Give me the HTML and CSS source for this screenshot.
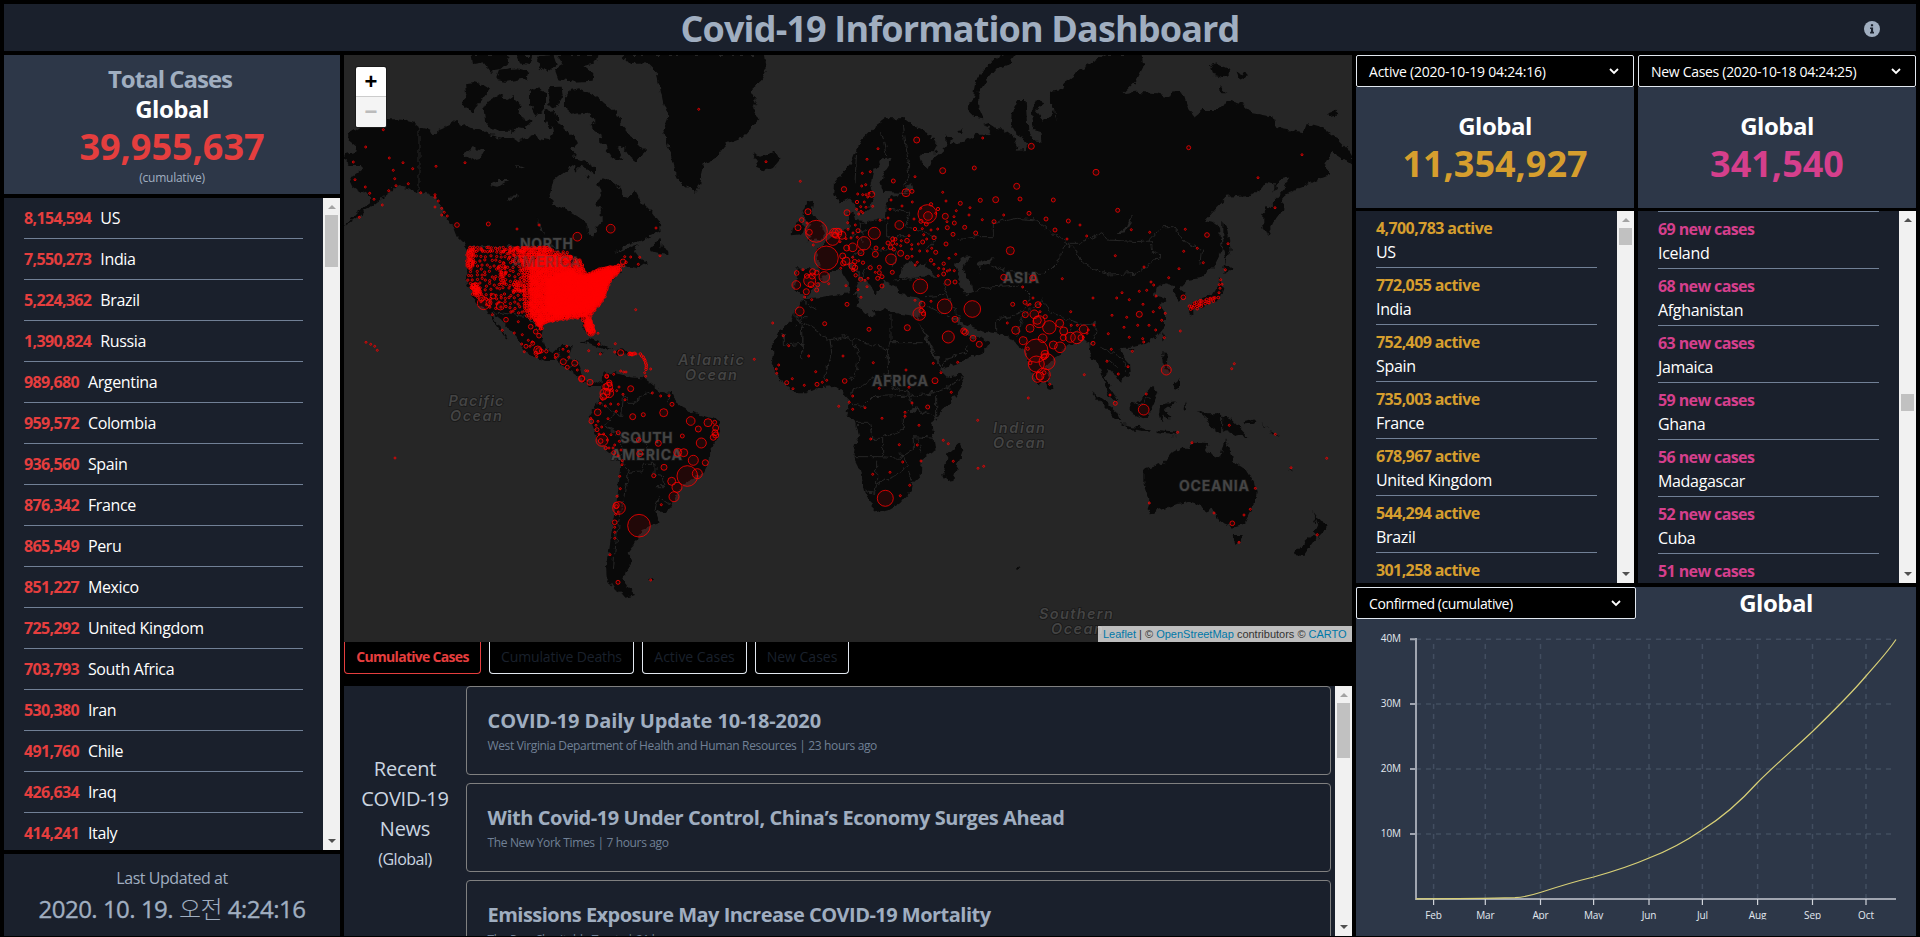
FILE: index.html
```html
<!DOCTYPE html>
<html lang="en">
<head>
<meta charset="utf-8">
<title>Covid-19 Information Dashboard</title>
<link rel="stylesheet" href="styles.css">
</head>
<body>
<div class="dashboard">
  <header class="header">
    <h1 class="title">Covid-19 Information Dashboard</h1>
    <svg class="info" viewBox="0 0 16 16"><circle cx="8" cy="8" r="8" fill="#a0aec0"/><path d="M6.9 3.2h2.2v2.1H6.9zM6.1 6.5h3v4.3h.9v1.6H6.1v-1.6h.9V8.1h-.9z" fill="#1a202c"/></svg>
  </header>
  <main class="main">
    <section class="left">
      <div class="total">
        <div class="total-title">Total Cases</div>
        <div class="global">Global</div>
        <div class="big red">39,955,637</div>
        <div class="caption">(cumulative)</div>
      </div>
      <div class="scroller cases">
        <ul class="list">
          <li><b>8,154,594</b>US</li><li><b>7,550,273</b>India</li><li><b>5,224,362</b>Brazil</li><li><b>1,390,824</b>Russia</li><li><b>989,680</b>Argentina</li><li><b>959,572</b>Colombia</li><li><b>936,560</b>Spain</li><li><b>876,342</b>France</li><li><b>865,549</b>Peru</li><li><b>851,227</b>Mexico</li><li><b>725,292</b>United Kingdom</li><li><b>703,793</b>South Africa</li><li><b>530,380</b>Iran</li><li><b>491,760</b>Chile</li><li><b>426,634</b>Iraq</li><li><b>414,241</b>Italy</li>
        </ul>
        <div class="bar"><i class="up"></i><span class="thumb thumb-cases"></span><i class="down"></i></div>
      </div>
      <div class="updated"><div class="updated-label">Last Updated at</div><div class="updated-time">2020. 10. 19. <span>오전</span> 4:24:16</div></div>
    </section>

    <section class="center">
      <div class="map">
        <svg class="map-canvas" viewBox="344 55 1008 587">
          <defs><filter id="coast" x="0" y="0" width="100%" height="100%" color-interpolation-filters="sRGB"><feTurbulence type="fractalNoise" baseFrequency="0.16" numOctaves="2" seed="4"/><feDisplacementMap in="SourceGraphic" scale="7" xChannelSelector="R" yChannelSelector="G"/></filter></defs>
          <rect x="344" y="55" width="1008" height="587" fill="#262626"/>
          <g filter="url(#coast)">
          <rect x="344" y="55" width="1008" height="587" fill="#262626"/>
          <g class="land" transform="translate(340,50) scale(.333333)">
            <path d="M20 250L45 242 60 232 100 225 140 210 185 212 225 222 237 232 262 238 285 250 300 238 330 225 350 210 360 230 380 225 400 235 430 240 450 255 475 262 510 262 530 275 560 265 580 255 600 265 625 270 640 250 635 225 650 205 670 235 690 255 700 250 715 275 690 300 710 325 700 345 665 370 640 390 630 430 640 465 680 480 715 500 740 520 745 550 760 560 768 535 785 515 785 480 770 460 785 430 775 400 785 385 815 395 840 415 850 440 870 445 885 420 905 455 935 485 960 520 962 545 930 560 890 575 850 590 825 612 850 602 893 585 885 605 900 625 920 635 890 655 870 650 840 645 835 670 800 700 795 735 765 765 748 800 765 840 752 858 735 835 725 808 680 802 640 808 610 825 605 860 615 895 640 905 665 885 695 885 690 910 680 930 715 935 725 965 730 985 750 1005 775 992 792 1002 782 1008 750 1008 720 985 680 955 650 930 620 930 580 920 550 905 540 875 510 840 485 810 460 790 452 785 465 810 490 845 505 868 495 862 470 825 450 800 440 780 415 765 395 730 380 700 378 650 385 600 375 585 350 560 340 535 320 500 300 470 285 440 260 430 237 425 205 415 170 405 150 425 130 440 100 465 60 495 15 527 50 490 90 460 90 440 65 425 40 410 28 385 50 370 70 355 60 345 30 345 12 330 15 315 45 308 50 290 25 270Z"/>
            <path d="M375 100L400 97 430 105 450 118 430 145 410 170 395 190 368 165 378 130Z M430 175L445 155 480 132 500 150 520 135 545 170 535 190 550 205 575 215 560 235 530 230 515 245 480 245 450 230 435 210Z M690 120L720 115 770 140 800 165 830 190 850 230 880 265 915 300 890 335 870 320 850 295 830 285 850 330 820 325 800 300 790 260 750 230 770 210 740 190 700 195 675 175 675 140Z M570 125L590 115 615 125 615 180 590 195 570 165Z M625 112L665 110 668 135 645 175 625 165Z M395 15L430 15 500 15 510 35 480 60 450 65 430 40 400 45Z M480 62L530 55 565 65 560 85 500 95 470 90Z M530 15L580 15 570 45 540 40Z M590 20L640 15 650 45 620 65 600 50Z M650 15L775 15 772 35 730 45 760 70 758 92 700 95 655 88 645 60 670 45Z M615 185L640 180 652 210 630 235 615 215Z M700 325L730 330 765 350 765 370 720 350 705 365Z M780 268L800 262 798 285 782 285Z M735 378L750 375 745 390Z M845 15L870 42 920 40 950 70 960 110 970 160 985 200 970 240 985 290 1000 350 1020 395 1050 418 1068 428 1080 400 1095 340 1130 320 1160 280 1210 260 1255 210 1240 180 1250 155 1230 120 1265 90 1280 60 1275 15Z M1238 310L1260 320 1285 312 1305 305 1322 330 1305 350 1275 362 1245 350 1255 335Z M930 600L950 570 962 568 965 592 985 605 985 615 935 608Z M720 875L745 868 780 880 820 898 785 893 745 878Z M825 900L850 898 870 912 830 915Z M775 908L790 908 785 914Z"/>
            <path d="M1395 745L1440 742 1480 735 1530 730 1555 735 1550 770 1595 800 1605 780 1640 778 1680 795 1725 800 1735 815 1755 860 1770 895 1785 925 1805 965 1820 980 1875 972 1865 1010 1830 1060 1795 1095 1775 1125 1780 1155 1785 1200 1745 1230 1742 1275 1720 1295 1715 1320 1680 1360 1655 1375 1610 1387 1595 1380 1595 1360 1575 1325 1560 1260 1540 1220 1545 1190 1555 1160 1545 1115 1530 1100 1520 1085 1528 1050 1505 1025 1480 1008 1440 1012 1400 1030 1375 1030 1350 1015 1325 995 1308 970 1295 940 1300 910 1298 880 1320 840 1355 810 1365 785Z M1860 1178L1870 1200 1855 1240 1840 1290 1820 1293 1810 1275 1817 1240 1825 1210Z"/>
            <path d="M790 970L830 970 870 982 910 985 935 1005 960 1025 1000 1030 1010 1060 1040 1080 1090 1095 1130 1105 1142 1135 1130 1170 1108 1200 1105 1240 1090 1270 1050 1290 1020 1315 1010 1340 990 1375 975 1388 945 1380 955 1410 945 1425 905 1440 890 1470 880 1490 865 1510 878 1535 860 1560 850 1590 870 1615 885 1632 860 1640 825 1620 800 1580 798 1540 808 1500 815 1440 825 1380 835 1320 840 1260 840 1235 800 1200 775 1170 755 1120 752 1095 770 1065 785 1030 788 1000Z M922 1588L942 1584 938 1592Z M1120 1620L1135 1632Z"/>
            <path d="M1400 455L1420 452 1415 485 1430 510 1445 530 1455 550 1440 570 1400 577 1415 558 1400 545 1415 525 1395 510 1388 485Z M1360 530L1380 515 1390 530 1385 550 1355 553Z"/>
          </g>
          <g class="land" transform="translate(850,50) scale(.333333)">
            <path d="M-45 395L0 345 15 310 35 270 70 235 110 205 160 205 190 228 230 245 262 285 255 310 210 308 215 340 235 355 250 325 270 310 290 290 285 260 310 262 300 285 340 275 380 255 425 252 400 215 430 235 460 240 490 262 505 290 500 302 530 300 538 275 500 255 483 225 485 190 500 150 530 150 535 240 550 270 575 275 570 245 552 240 545 180 555 150 580 160 555 180 580 215 612 180 620 215 615 175 600 150 600 125 640 120 650 90 690 60 740 30 770 15 875 15 880 50 860 90 820 130 860 125 920 130 960 140 970 120 1000 130 1015 175 1035 200 1060 180 1110 180 1130 150 1180 165 1210 190 1270 200 1280 235 1310 240 1360 250 1370 222 1420 235 1460 265 1495 300 1506 318 1506 345 1470 320 1445 305 1425 340 1440 375 1400 390 1360 410 1320 425 1300 440 1300 480 1270 520 1252 558 1240 530 1240 490 1270 455 1300 420 1315 385 1290 390 1270 425 1275 400 1250 395 1230 420 1200 435 1130 440 1100 470 1065 510 1090 515 1110 530 1115 600 1090 650 1050 685 1010 690 990 710 1008 740 985 752 975 730 975 708 945 700 920 712 915 735 950 745 925 765 945 790 945 830 920 860 890 880 850 890 820 890 805 900 840 940 842 970 810 995 800 975 775 960 765 985 778 1010 805 1050 790 1050 770 1025 760 980 740 930 720 925 715 880 700 865 680 880 645 890 615 925 590 950 600 985 580 1000 565 1000 550 985 535 940 522 895 495 880 480 860 440 850 400 845 345 822 325 800 305 800 335 830 345 850 365 870 390 860 418 880 400 905 360 925 290 950 275 955 255 905 225 850 205 815 210 790 215 755 205 742 150 735 135 710 100 690 95 715 75 735 55 700 50 690 20 665 0 635 -5 650 20 670 40 695 25 700 10 735 0 735 -5 700 -30 660 -70 668 -100 705 -130 740 -165 720 -160 655 -95 660 -90 635 -105 605 -90 590 -60 565 0 530 -5 490 10 482 15 510 60 515 105 505 108 460 125 440 180 430 100 425 90 395 110 360 122 322 95 325 70 360 62 400 70 440 50 480 30 497 15 465 0 445 -30 458 -47 435Z"/>
            <path d="M460 15L497 15 480 40 440 55 410 90 385 130 385 170 400 205 375 200 350 175 370 140 375 100 400 60 430 30Z M1080 45L1100 40 1145 60 1120 82 1090 75Z M1160 65L1195 78 1180 87 1165 78Z M1110 112L1132 130 1112 130Z M1435 190L1455 182 1467 192 1440 200Z M322 240L338 238 330 252Z M1120 515L1130 530 1136 560 1142 600 1128 640 1120 600Z M1125 640L1152 658 1120 672Z M1110 685L1120 720 1108 748 1060 768 1030 782 1030 795 1018 790 1015 768 1050 750 1085 735 1100 710Z M940 850L946 858 940 872Z M840 897L855 897 847 910Z M937 910L953 912 950 950 965 970 950 962 938 940Z M970 1003L990 985 990 1015 975 1020Z"/>
            <g transform="translate(0,900)"><path d="M722 122L760 150 800 185 815 217 795 205 755 160Z M812 222L860 230 905 242 900 245 845 238Z M920 240L985 245 970 262 975 252 920 246Z M840 160L860 160 890 130 905 110 925 125 915 150 900 185 880 205 845 190Z M930 165L975 157 945 178 965 205 950 205 942 190 935 218 928 190Z M1040 180L1060 190 1100 190 1140 205 1170 235 1195 262 1160 255 1130 240 1110 250 1080 230 1070 205Z M1180 215L1215 205 1210 218 1185 220Z M1005 150L1008 175 1000 180Z M880 360L940 340 965 310 1000 290 1020 300 1030 275 1075 280 1065 300 1110 325 1125 265 1140 300 1155 340 1190 360 1215 400 1220 430 1205 480 1185 520 1150 530 1110 515 1095 490 1085 470 1070 488 1055 465 1020 455 970 465 930 480 905 490 892 480 900 455 880 400Z M1147 555L1175 555 1172 580 1157 583Z M1387 485L1410 515 1432 520 1420 545 1405 560 1395 545 1405 525Z M1390 555L1400 560 1360 618 1332 615 1350 590Z M592 90L608 112 597 120 590 108Z M1315 350L1333 363 1320 357Z M1235 220L1260 238 1240 226Z M1262 240L1290 260 1270 250Z M498 650L512 655 500 660Z"/></g>
            <path class="water" d="M150 680L155 650 185 630 200 652 230 640 225 650 260 680 215 680 180 687Z M315 645L340 620 362 618 350 640 335 650 360 690 370 730 340 730 325 700 330 680Z M380 640L410 630 430 628 415 645 385 650Z M795 555L830 530 845 495 845 520 825 550Z M165 425L190 415 185 400 165 410Z"/>
            <path class="water" d="M182 1070L200 1072 195 1092 182 1088Z"/>
          </g>
          <g class="land" transform="translate(340,50) scale(.333333)"><path class="water" d="M370 315L400 295 435 300 420 325 395 330Z M450 405L475 390 505 390 470 410Z M590 500L600 540 615 555 600 530Z M510 440L540 435 500 455Z M530 345L560 350 540 355Z M475 250L530 258 525 268 480 262Z"/></g>
          <g class="borders" transform="translate(850,50) scale(.333333)">
            <path d="M-165 765L-165 800-60 870-55 905-80 995M-165 800L-145 800-140 880-200 885-200 850M-145 830V935M-60 870L-20 860 0 865 115 900 110 920 123 878H218M123 795V878M0 865L25 905 20 960 0 990M115 900L115 970 60 990 0 1030M115 970L125 1010 190 1035 240 1030 300 1010 345 975M0 1060L40 1070 70 1040 180 1035M180 1035L190 1075 160 1100 160 1140 100 1160M260 1035V1100L190 1075M20 1120H60L65 1165 98 1165V1220H10M98 1220L145 1225 190 1200 190 1160 255 1165M80 1235V1300L130 1280 175 1245 150 1210M80 1300L75 1330 50 1325M175 1260L185 1300M205 1165L215 1210M40 235L20 300 15 400M95 245L110 320M160 225L180 380 155 415M105 470L180 490 165 530 260 560 230 600M110 515V560L170 560M60 600L140 600 130 650M100 510L30 520 40 580M320 570L380 560 430 560 430 520 500 505 560 510 600 545 650 580 620 640 590 670 540 670 480 665 430 650 390 635 388 675M650 580L690 580 755 550 770 570 870 575 900 570 905 600 930 620 860 670 780 675 720 655 690 630 680 600ZM900 570L935 530 970 530 1000 570 1055 600 1050 640M350 735L380 720 430 710 510 705 545 740 520 780 480 800 440 810 440 845M280 700L300 750 325 800M225 740L290 735M235 770L300 800M280 950L285 925 340 910 355 890M500 860L520 800 575 750 600 790 700 825 740 820 735 860 720 890M660 820L670 850 690 840M750 890L790 910 820 930 830 970M770 925L800 950M1115 1090V1150M845 1060L870 1065 900 1040M0 560L50 540M0 620L45 600M130 690L210 685M-150 745L-100 780M30 690L60 640M-130 800L-165 830"/>
          </g>
          <g class="borders" transform="translate(340,50) scale(.333333)"><path d="M237 232V425M385 590H630L700 620M850 1030L865 1060 890 1060 895 1040 940 1025M985 1030V1060M780 1060L825 1090 790 1130 835 1150 845 1180 845 1230 870 1270 905 1265 910 1240 945 1240 945 1275 970 1280 975 1310 945 1310M850 1040L845 1100 825 1090M850 1180L900 1160 925 1190 935 1230M865 1270L850 1350 835 1420 825 1500 820 1560M945 1380L955 1340 1000 1370M650 930L660 900M690 955L720 935M460 785L560 800 600 840"/></g>
          </g>
          <g class="continents">
            <text x="546.5" y="249" textLength="53">NORTH</text>
            <text x="646.5" y="443" textLength="52">SOUTH</text><text x="646.5" y="460" textLength="71">AMERICA</text>
            <text x="1021" y="283" textLength="36">ASIA</text><text x="900" y="386" textLength="56">AFRICA</text><text x="1214" y="491" textLength="70">OCEANIA</text>
          </g>
          <g class="oceans">
            <text x="476" y="406" textLength="55">Pacific</text><text x="476" y="421" textLength="52">Ocean</text>
            <text x="711" y="365" textLength="66">Atlantic</text><text x="711" y="380" textLength="52">Ocean</text>
            <text x="1019" y="433" textLength="52">Indian</text><text x="1019" y="448" textLength="52">Ocean</text>
            <text x="1076" y="619" textLength="74">Southern</text><text x="1077" y="634" textLength="52">Ocean</text>
          </g>
          <g id="cases"></g>
          <text class="faint" x="546" y="266.5" textLength="69">AMERICA</text>
        </svg>
        <div class="zoom-control"><span>+</span><span class="off">−</span></div>
        <div class="attribution"><a>Leaflet</a> | © <a>OpenStreetMap</a> contributors © <a>CARTO</a></div>
      </div>
      <nav class="tabs"><span class="tab tab-1 on">Cumulative Cases</span><span class="tab tab-2">Cumulative Deaths</span><span class="tab tab-3">Active Cases</span><span class="tab tab-4">New Cases</span></nav>
      <div class="news">
        <div class="news-head"><span>Recent<br>COVID-19<br>News</span><small>(Global)</small></div>
        <div class="articles">
          <article><h2 class="a1">COVID-19 Daily Update 10-18-2020</h2><p>West Virginia Department of Health and Human Resources | 23 hours ago</p></article>
          <article><h2 class="a2">With Covid-19 Under Control, China’s Economy Surges Ahead</h2><p>The New York Times | 7 hours ago</p></article>
          <article><h2 class="a3">Emissions Exposure May Increase COVID-19 Mortality</h2><p>The Pew Charitable Trusts | 21 hours ago</p></article>
        </div>
        <div class="bar"><i class="up"></i><span class="thumb thumb-news"></span><i class="down"></i></div>
      </div>
    </section>

    <section class="right">
      <div class="stats">
        <div class="stat">
          <div class="select"><span class="s1">Active (2020-10-19 04:24:16)</span><svg viewBox="0 0 12 8"><path d="M2 2l4 4 4-4"/></svg></div>
          <div class="stat-card"><div class="global">Global</div><div class="big yellow">11,354,927</div></div>
          <div class="scroller">
            <ul class="pairs active">
              <li><b>4,700,783 active</b>US</li><li><b>772,055 active</b>India</li><li><b>752,409 active</b>Spain</li><li><b>735,003 active</b>France</li><li><b>678,967 active</b>United Kingdom</li><li><b>544,294 active</b>Brazil</li><li><b>301,258 active</b></li>
            </ul>
            <div class="bar"><i class="up"></i><span class="thumb thumb-active"></span><i class="down"></i></div>
          </div>
        </div>
        <div class="stat">
          <div class="select"><span class="s2">New Cases (2020-10-18 04:24:25)</span><svg viewBox="0 0 12 8"><path d="M2 2l4 4 4-4"/></svg></div>
          <div class="stat-card"><div class="global">Global</div><div class="big pink">341,540</div></div>
          <div class="scroller">
            <ul class="pairs new">
              <li><b>69 new cases</b>Iceland</li><li><b>68 new cases</b>Afghanistan</li><li><b>63 new cases</b>Jamaica</li><li><b>59 new cases</b>Ghana</li><li><b>56 new cases</b>Madagascar</li><li><b>52 new cases</b>Cuba</li><li><b>51 new cases</b></li>
            </ul>
            <div class="bar"><i class="up dark"></i><span class="thumb thumb-new"></span><i class="down"></i></div>
          </div>
        </div>
      </div>
      <div class="chart">
        <div class="chart-head"><div class="select"><span class="s3">Confirmed (cumulative)</span><svg viewBox="0 0 12 8"><path d="M2 2l4 4 4-4"/></svg></div><div class="global">Global</div></div>
        <svg class="plot" viewBox="1356 619 560 317">
          <g stroke="#4a5568" stroke-opacity=".75" stroke-width="1.5">
            <path stroke-dasharray="5 5" d="M1416 639.2H1896M1416 704H1896M1416 769H1896M1416 834H1896"/>
            <path stroke-dasharray="5 5" d="M1433.6 899V639M1485.3 899V639M1540.5 899V639M1593.6 899V639M1649 899V639M1702.4 899V639M1757.6 899V639M1812.5 899V639M1866 899V639"/>
          </g>
          <g stroke="#a0a5b0" stroke-width="2" fill="none">
            <path d="M1416 638V899M1415 899H1896M1410 639.2H1416M1410 704H1416M1410 769H1416M1410 834H1416"/>
            <path stroke="#cfd3da" stroke-width="1.2" d="M1433.6 899V905M1485.3 899V905M1540.5 899V905M1593.6 899V905M1649 899V905M1702.4 899V905M1757.6 899V905M1812.5 899V905M1866 899V905"/>
          </g>
          <path class="curve" d="M1416 898.8C1450 898.8 1490 898.4 1515 897.7C1525 897 1534 894.6 1541 892.3C1560 886 1577 881 1593.6 877C1613 871.5 1632 865.5 1649 858C1670 850 1686 841 1702.4 829.7C1723 817 1740 802 1757.6 782.5C1775 765 1794 749 1812.5 731.5C1831 713.5 1850 695 1866 676C1878 662 1887 653 1896 639.5"/>
          <g class="ticks"><g text-anchor="end"><text x="1401" y="642">40M</text><text x="1401" y="707">30M</text><text x="1401" y="772">20M</text><text x="1401" y="837">10M</text></g>
          <g text-anchor="middle"><text x="1433.6" y="919">Feb</text><text x="1485.3" y="919">Mar</text><text x="1649" y="919">Jun</text><text x="1702.4" y="919">Jul</text><text x="1866" y="919">Oct</text></g>
          <g text-anchor="middle" class="months"><text x="1540.5" y="919">Apr</text><text x="1593.6" y="919">May</text><text x="1757.6" y="919">Aug</text><text x="1812.5" y="919">Sep</text></g></g>
        </svg>
      </div>
    </section>
  </main>
</div>
<script src="map.js"></script>
</body>
</html>
```
FILE: styles.css
```css
* { box-sizing: border-box; }
body { margin: 0; height: 937px; background: #000; color: #fff; font-family: "Open Sans", "Noto Sans", "Noto Sans CJK KR", sans-serif; overflow: hidden; }
ul, h1, h2, p { margin: 0; padding: 0; list-style: none; }
.dashboard { height: 937px; padding: 4px 4px 1px; display: flex; flex-direction: column; gap: 4px; }
.header { height: 47px; background: #1a202c; display: grid; grid-template-columns: 1fr auto 1fr; align-items: center; }
.title { grid-column: 2; color: #a0aec0; font-size: 36px; line-height: 47px; padding-top: 1px; font-weight: 700; letter-spacing: -.85px; white-space: nowrap; }
.info { width: 16px; height: 16px; justify-self: end; margin-right: 36px; margin-top: 2px; }
.main { flex: 1; min-height: 0; display: grid; grid-template-columns: 336px 1008px 560px; gap: 4px; }
.left { display: grid; grid-template-rows: 139px 652px 82px; gap: 4px; text-align: center; }
.total { background: #2d3748; padding-top: 9px; }
.total-title { color: #a0aec0; font-size: 24px; line-height: 30px; font-weight: 700; letter-spacing: -1px; padding-right: 4px; }
.global { font-size: 24px; line-height: 30px; font-weight: 700; letter-spacing: -.5px; }
.big { font-size: 36px; line-height: 45px; font-weight: 700; }
.red { color: #e53e3e; }
.yellow { color: #d69e2e; }
.pink { color: #d53f8c; }
.caption { color: #a0aec0; font-size: 12px; line-height: 16px; padding-top: 1px; letter-spacing: -.25px; }
.scroller { display: flex; min-height: 0; background: #1a202c; overflow: hidden; }
.list { flex: 1; padding: 0 20px; text-align: left; }
.list li { height: 41px; line-height: 41px; border-bottom: 1px solid #718096; font-size: 16px; letter-spacing: -.35px; white-space: nowrap; }
.list b { color: #e53e3e; font-weight: 700; margin-right: 9px; letter-spacing: -.65px; }
.updated { background: #1a202c; color: #a0aec0; padding-top: 12px; }
.updated-label { font-size: 16px; line-height: 24px; letter-spacing: -.45px; }
.updated-time { font-size: 24px; line-height: 36px; letter-spacing: -.5px; -webkit-text-stroke: .35px #a0aec0; }
.updated-time span { font-family: "Noto Sans CJK KR", sans-serif; font-weight: 300; -webkit-text-stroke: 0; }

.bar { flex: none; width: 17px; background: #f1f1f1; display: flex; flex-direction: column; align-items: center; }
.bar i { width: 0; height: 0; border: 4px solid transparent; }
.bar .up { border-top: 0; border-bottom-color: #a3a3a3; margin: 7px 0 6px; }
.bar .up.dark { border-bottom-color: #505050; }
.bar .down { border-bottom: 0; border-top-color: #505050; margin-top: auto; margin-bottom: 7px; }
.thumb { width: 13px; background: #c1c1c1; }
.thumb-cases { height: 52px; }
.thumb-news { height: 55px; }
.thumb-active { height: 17px; }
.thumb-new { height: 17px; margin-top: 166px; }

.center { display: grid; grid-template-rows: 587px 44px 250px; min-width: 0; }
.map { position: relative; overflow: hidden; background: #262626; }
.map-canvas { display: block; width: 1008px; height: 587px; }
.land path { fill: #090909; }
.land path.water { fill: #262626; }
.borders { fill: none; stroke: #262626; stroke-width: 3; }
.continents, .oceans { font-family: Inter, sans-serif; fill: #444; text-anchor: middle; stroke: #171717; stroke-width: 1.5px; paint-order: stroke; }
.continents { font-size: 14px; font-weight: 700; }
.faint { font: 700 14px Inter, sans-serif; fill: #444; fill-opacity: .45; text-anchor: middle; }
.oceans { font-size: 14.5px; font-weight: 600; font-style: italic; fill: #444; }
#cases { fill: #f00; fill-opacity: .1; stroke: #f00; stroke-width: 1; stroke-opacity: .8; }
.zoom-control { position: absolute; left: 12px; top: 12px; width: 30px; height: 60px; border-radius: 2px; background: #fff; box-shadow: 0 0 0 1px #1b1b1b; overflow: hidden; color: #000; font: 700 22px/30px "Liberation Sans", sans-serif; text-align: center; }
.zoom-control span { display: block; height: 30px; border-bottom: 1px solid #ccc; }
.zoom-control .off { background: #f4f4f4; color: #bbb; border: 0; }
.attribution { position: absolute; right: 0; bottom: 0; width: 254px; height: 16px; padding: 0 5px; background: rgba(255,255,255,.7); color: #333; font: 11px/16px "Liberation Sans", sans-serif; white-space: nowrap; }
.attribution a { color: #0078a8; }
.tabs { display: flex; height: 32px; gap: 8px; }
.tab { border: 1px solid #e2e8f0; border-top: 0; border-radius: 0 0 4px 4px; color: #1a202c; font-size: 14px; line-height: 30px; text-align: center; font-weight: 400; white-space: nowrap; }
.tab-1 { width: 137px; } .tab-2 { width: 145px; } .tab-3 { width: 105px; } .tab-4 { width: 94px; }
.tab-2 { letter-spacing: -.15px; }
.tab.on { color: #e53e3e; border-color: #e53e3e; font-weight: 700; letter-spacing: -.7px; }
.news { display: flex; background: #1a202c; overflow: hidden; }
.news-head { width: 122px; display: flex; flex-direction: column; justify-content: center; text-align: center; color: #cbd5e0; font-size: 20px; line-height: 30px; letter-spacing: -.25px; padding-top: 6px; }
.news-head small { font-size: 16px; letter-spacing: -.5px; }
.articles { flex: 1; display: flex; flex-direction: column; gap: 8px; padding-right: 4px; }
.articles article { flex: none; height: 89px; border: 1px solid gray; border-radius: 4px; padding: 19px 20.5px; }
.articles h2 { color: #a0aec0; font-size: 20px; line-height: 30px; font-weight: 700; letter-spacing: -.45px; }
.articles .a1 { letter-spacing: -.07px; }
.articles .a2 { letter-spacing: -.44px; }
.articles .a3 { letter-spacing: -.52px; }
.articles p { color: #718096; font-size: 12px; line-height: 20px; letter-spacing: -.35px; }

.right { display: grid; grid-template-rows: 528px 349px; gap: 4px; }
.stats { display: grid; grid-template-columns: 278px 278px; gap: 4px; min-height: 0; }
.stat { display: grid; grid-template-rows: 32px 121px 372px; min-height: 0; }
.stat .scroller { margin-top: 3px; height: 372px; }
.select { height: 32px; display: flex; align-items: center; justify-content: space-between; background: #000; border: 1px solid #e2e8f0; border-radius: 2px; padding: 0 13px 0 12px; font-size: 14px; letter-spacing: -.22px; white-space: nowrap; }
.s2 { letter-spacing: -.3px; }
.s3 { letter-spacing: -.4px; }
.select svg { width: 12px; height: 8px; fill: none; stroke: #fff; stroke-width: 1.8; }
.stat-card { background: #2d3748; text-align: center; padding-top: 24px; }
.pairs { flex: 1; padding: 0 20px; letter-spacing: -.33px; font-size: 16px; line-height: 24px; }
.pairs li { height: 57px; padding-top: 5px; border-bottom: 1px solid #718096; white-space: nowrap; }
.pairs b { display: block; font-weight: 700; letter-spacing: -.6px; margin-top: -.5px; }
.active b { color: #d69e2e; }
.new b { color: #d53f8c; }
.new::before { content: ""; display: block; height: 1px; background: #718096; }
.chart { background: #2d3748; overflow: hidden; }
.chart-head { display: grid; grid-template-columns: 280px 280px; align-items: center; text-align: center; height: 32px; }
.chart-head .select { text-align: left; }
.plot { display: block; width: 560px; height: 317px; }
.curve { fill: none; stroke: #d8d077; stroke-width: 1.2; }
.ticks { fill: #e2e8f0; font-size: 10px; letter-spacing: -.1px; }
.months { clip-path: inset(0 0 2.5px 0); }
```
FILE: map.js
```js
// Case markers: x,y[,r] triples in thirds of a pixel, relative to a tile's corner.
const tiles = [
  [340, 50, "130,239 77,291 40,336 148,324 189,338 160,361 218,356 164,386 45,389 76,411 89,430 102,448 127,465 58,502 146,422 168,407 205,401 288,349 375,338 242,428 285,434 285,442 295,453 285,471 305,475 313,487 305,495 322,498 351,525,7 445,522,6 531,537 597,525 712,560,13 812,536,13 948,534 960,617 872,621 899,622 895,643 854,620 849,635,8 887,779 1076,178 1278,335 1381,394 774,850 776,883 826,881 842,908,9 824,906 868,912,5 873,912,5 880,912,5 888,912 870,910,4 876,914,4 884,910,4 901,912,4 905,918,4 910,922,4 913,928,4 915,932,4 917,939,4 919,945,4 919,952,4 918,958,4 914,968 932,957 917,979 746,902 781,912 842,963 851,966 858,966 743,963 800,978,6 821,973 104,889 78,877 92,883 112,901 431,760,19 459,739,8 481,768,12 425,745,9 447,758,9 498,809,7 457,794 535,815 487,841 523,849 547,854 572,830,7 587,845,7 597,857,7 565,871 577,876 545,882 558,889,6 570,889 578,880,6 553,905 593,900,12 596,902,9 588,910,6 604,903,6 590,920 619,904,5 614,923 649,916,6 646,923 669,898 680,889 685,904 686,922 670,935,9 704,940,9 682,952,6 712,960 725,985,9 753,845,13 748,838,7 1404,485,9 1385,510,7 1401,519 1374,533,9 1408,547,9 1429,544,33 1420,585 1459,624,36 1478,566,20 1482,548,13 1490,550,15 1496,545,10 1506,556,12 1486,555,8 1512,418,8 1521,488,9 1523,518 1524,538 1518,566 1500,575 1520,594,9 1508,618,9 1518,633,12 1510,640,8 1502,655 1370,669,7 1389,659 1418,665,9 1430,668,7 1400,678,7 1417,678,9 1409,692,18 1453,681,16 1369,705,13 1413,704,9 1433,704,6 1399,725,9 1430,720,6 1466,701 1394,741 1415,749 1379,784,13 1454,821,6 1518,707 1521,763,6 1298,819 1330,857 1346,887 1406,918 1427,965 1509,918 1243,928 1316,945 1309,957 1310,970"],
  [850, 50, "200,270,9 84,296 51,328 398,264 544,289,9 1016,293,6 1356,314 1224,383 61,365 37,370 130,393,6 195,380 278,362,9 373,354,6 738,367,9 35,408 47,404 23,432 38,434 48,434 65,433,9 57,430 53,441 168,428,12 186,424,6 278,427 500,409,9 510,447,6 437,449,9 391,451,6 610,450,6 803,481,6 1275,473 21,456,5 43,456 68,469 32,470 48,472 20,478 33,484 38,488 26,492 123,450 156,468 187,456 288,453 243,463,5 331,460,6 360,473 264,477,5 319,482 120,478 114,504 90,511 232,492,28 234,498,13 212,475 257,490 213,514,6 229,522,6 192,507 286,499,9 312,500 357,495 397,509 461,495 537,490,6 588,507,6 655,513,6 690,525 432,515,6 313,519,6 292,533,6 291,515 344,532,6 377,549,6 309,553,6 615,540,6 651,567 710,558 844,539 899,547 1006,538 1071,555,7 1134,581 1042,595 1001,604 796,617 1060,638 1126,659 987,656 882,651 956,683 16,525 24,542,6 9,549 3,564 22,562 73,550,18 148,525,13 195,537,5 217,536 243,540 263,537 221,554 252,563,6 230,567 177,557 171,572,7 154,572 128,567,6 136,568,5 114,579,6 128,579,6 122,592,7 100,595 131,598,5 140,583 152,587 42,580,20 8,592,13 33,608,9 76,613,9 78,594,6 152,610,9 123,628,16 172,622,6 186,619 185,597 185,584 205,582 218,576,6 209,603 232,603 245,595 257,607,6 288,582,6 317,613 297,625 243,631,5 202,637 196,645 252,643 266,655 281,641,5 281,657 292,663 299,660 313,662 281,672,6 265,677 14,635,7 26,632 39,638,5 7,648,10 15,653,8 10,660,5 8,622 61,653,6 88,652,6 88,668,6 76,667 96,680,6 83,685,6 127,667,6 17,676,5 32,688,6 45,691 54,685 96,708,6 51,710 24,719 33,742 211,709,22 293,697,9 315,696,6 195,751 216,763,9 243,754 284,769,22 208,792,19 214,782,7 220,791,6 367,777,25 315,808,9 172,833,9 57,838,6 295,861,18 341,843,9 346,847,9 369,865,9 388,883,9 323,937 250,940 168,960 70,938 273,968 481,602,12 461,682,9 548,684,9 637,686 518,711 488,763,6 525,757,6 533,765 540,763 549,744 564,764,9 571,763 526,794,9 553,793,13 570,785 586,800,6 562,811,12 567,815,18 598,832,20 629,820,12 641,843,12 497,841,12 540,835,12 472,819 520,872,12 578,865,13 640,863,9 661,862,15 680,863,18 701,838,13 693,863,9 700,862 664,826 682,826 715,840 711,850 732,825 610,885,12 630,892,16 559,902,35 585,913,12 533,896,5 591,935,24 582,920,9 559,942,24 541,939,5 662,785 729,744 800,744 816,728 838,749 868,724 890,721 903,696 911,705 918,738 879,763 929,773 910,785 868,793,9 946,790 935,811 917,840 897,826 863,826 830,802 786,796 822,832 775,851 838,862 878,866 881,876 729,880,6 784,898 847,904 943,863 991,843 1000,742,7 771,934 834,950 805,972 703,974 949,960,15 1153,941 1145,956 1112,689 1116,703 1108,704 1110,715 1107,728"],
  [340, 350, "165,324 750,97,9 725,87,9 737,62 805,110,13 800,80,5 808,98,8 797,110,9 809,103,7 808,130,13 795,130,15 790,140,10 800,125,10 815,120,5 787,148 796,168 780,160 830,122 837,111 849,133 855,149 835,163 812,162 804,206 829,184 872,116,9 937,129 962,138 987,137 996,163,6 971,188,12 910,194,6 878,200,9 773,187,10 754,214,7 752,205 768,226 774,214 771,239,6 785,231 786,271,18 782,273,7 777,252 791,252 813,254 835,248,6 838,274 824,285 819,294 807,294 797,294,5 802,270 821,308,6 834,317 843,300 847,332 846,344 839,379 841,416 831,439 829,466,9 837,474,19 829,470,6 827,493 835,486 824,517,7 824,532 824,547 824,565 810,614 834,697,6 932,690 897,527,34 964,464 941,377,6 972,352,9 955,280,9 896,270,7 899,311,9 1027,258,6 1052,213,13 1075,237,9 1084,279,15 1104,218,12 1124,217,6 1127,234,9 1125,248,9 1120,262,9 1127,255,9 1096,338,9 1060,331,15 1031,308,12 1013,307,12 1042,378,31 1072,371,15 995,394,12 1011,412,15 1002,440,15 1340,98,6 1357,86 1359,116 1393,106 1431,103,6 1447,97 1460,91 1514,93,7 1496,169 1528,157"],
  [850, 350, "255,92,9 88,115 177,112 304,127 186,159 233,171,6 8,138 8,178 45,173 165,187 165,199 96,205 207,226 62,267 148,284 202,285 213,333 158,336 120,367 68,373 310,334 179,406 151,437 106,445,24 280,271 295,281 383,211 384,355 401,349 535,144 599,103 580,75,21 562,82,15 582,68,6 570,78,12 780,135 796,160,6 889,132 881,179,16 983,247 1026,278 1138,226 1276,253 1323,353 1430,325 1216,415 898,459 1092,489 1182,495 1201,478 1147,520,7 1167,577 1402,554"]
];
const layer = document.getElementById("cases");
const ns = "http://www.w3.org/2000/svg";
let seed = 7;
const rnd = () => (seed = (seed * 16807) % 2147483647) / 2147483647;

function mark(x, y, r) {
  const c = document.createElementNS(ns, "circle");
  c.setAttribute("cx", x.toFixed(1));
  c.setAttribute("cy", y.toFixed(1));
  c.setAttribute("r", r.toFixed(2));
  layer.appendChild(c);
}
function inside(x, y, poly) {
  let hit = false;
  for (let i = 0, j = poly.length - 1; i < poly.length; j = i++) {
    const [xi, yi] = poly[i], [xj, yj] = poly[j];
    if ((yi > y) !== (yj > y) && x < (xj - xi) * (y - yi) / (yj - yi) + xi) hit = !hit;
  }
  return hit;
}
// Fills an area with county-sized markers on a jittered grid.
function scatter(poly, step, jitter, r) {
  const xs = poly.map(p => p[0]), ys = poly.map(p => p[1]);
  for (let y = Math.min(...ys); y < Math.max(...ys); y += step)
    for (let x = Math.min(...xs); x < Math.max(...xs); x += step) {
      const px = x + (rnd() - .5) * jitter, py = y + (rnd() - .5) * jitter;
      if (inside(px, py, poly)) mark(340 + px / 3, 50 + py / 3, r / 3);
    }
}
scatter([[382,592],[560,592],[560,795],[500,785],[440,770],[398,735],[382,690]], 14, 10, 3.4);
scatter([[382,592],[400,592],[405,640],[390,660],[380,650]], 6, 5, 4);
scatter([[400,592],[560,592],[560,606],[400,606]], 10, 8, 3.6);
scatter([[480,592],[560,592],[560,650],[510,640]], 9, 7, 3.4);
scatter([[470,640],[500,640],[500,705],[485,705]], 8, 6, 3.6);
scatter([[392,705],[412,700],[425,730],[405,738]], 5, 4, 5);
scatter([[516,695],[550,690],[556,725],[520,730]], 7, 6, 4);
scatter([[530,592],[630,592],[640,604],[620,620],[742,682],[780,655],[830,645],[862,632],[835,670],[800,700],[795,745],[752,795],[765,842],[752,858],[732,825],[722,803],[670,808],[612,820],[605,840],[580,815],[555,795],[548,700]], 7.6, 4, 3.8);
scatter([[560,592],[630,592],[640,604],[700,620],[560,660]], 7, 5, 3.6);
scatter([[640,604],[690,604],[690,618],[640,618]], 13, 9, 3.4);
scatter([[570,650],[600,615],[665,622],[695,618],[690,660],[705,625],[722,628],[740,675],[780,655],[838,645],[838,665],[800,700],[795,745],[750,795],[735,800],[670,808],[612,820],[600,840],[570,790]], 5.2, 3, 4);
scatter([[620,690],[690,660],[720,680],[790,665],[825,660],[790,740],[745,780],[650,800],[620,780]], 5, 3, 4.6);
scatter([[735,805],[750,800],[765,842],[752,856],[735,830]], 5, 3, 4);
scatter([[1016,765],[1060,745],[1105,735],[1108,748],[1060,768],[1025,785]].map(([x, y]) => [x + 1530, y]), 8, 6, 4);

for (const [ox, oy, data] of tiles)
  for (const item of data.split(" ")) {
    const [x, y, r = 3] = item.split(",").map(Number);
    mark(ox + x / 3, oy + y / 3, r / 3);
  }
```
